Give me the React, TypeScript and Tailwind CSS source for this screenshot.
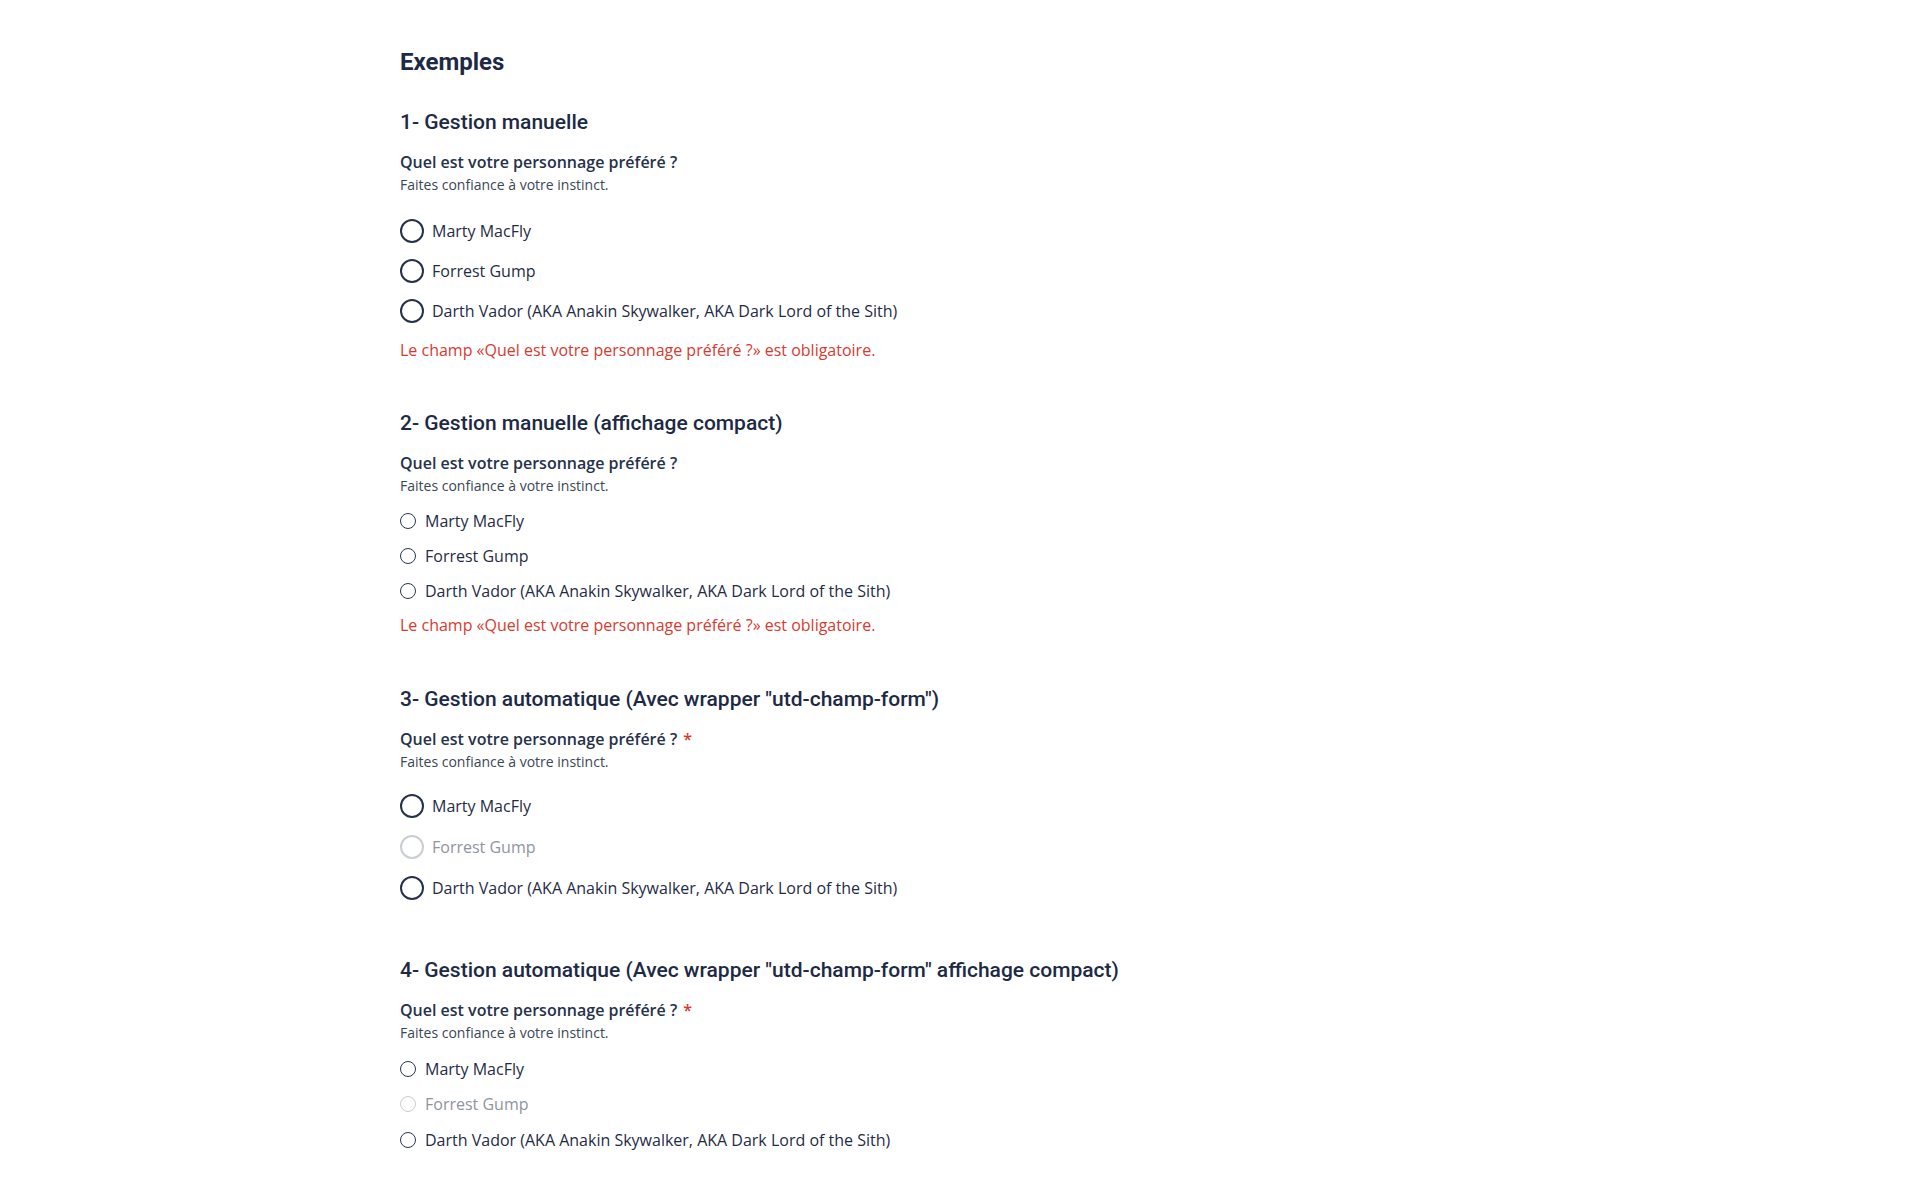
import React from 'react';

const options = [
  { label: 'Marty MacFly' },
  { label: 'Forrest Gump' },
  { label: 'Darth Vador (AKA Anakin Skywalker, AKA Dark Lord of the Sith)' },
];

const ERROR = 'Le champ «Quel est votre personnage préféré ?» est obligatoire.';

const Radio = ({ label, compact, disabled, tall }: { label: string; compact?: boolean; disabled?: boolean; tall?: boolean }) => {
  if (compact) {
    return (
      <label className={`flex items-center gap-[9px] ${tall ? 'h-[35.5px]' : 'h-[35px]'}`}>
        <span
          className={`w-4 h-4 rounded-full border ${disabled ? 'border-[#c9cdd4]' : 'border-[#2a3650]'}`}
        />
        <span className={`text-[16px] ${disabled ? 'text-[#8f959f]' : 'text-[#1f2c47]'}`}>{label}</span>
      </label>
    );
  }
  return (
    <label className={`flex items-center gap-[8px] ${tall ? 'h-[41px]' : 'h-10'}`}>
      <span
        className={`w-6 h-6 rounded-full border-2 ${disabled ? 'border-[#c9cdd4]' : 'border-[#26324c]'}`}
      />
      <span className={`text-[16px] ${disabled ? 'text-[#8f959f]' : 'text-[#1f2c47]'}`}>{label}</span>
    </label>
  );
};

const Question = ({ required }: { required?: boolean }) => (
  <div>
    <p className="text-[16px] leading-6 font-semibold text-[#26324a]">
      Quel est votre personnage préféré ?
      {required && <span className="text-[#d83a30] ml-[6px]">*</span>}
    </p>
    <p className="pt-[1px] text-[14px] leading-5 text-[#3c4658]">Faites confiance à votre instinct.</p>
  </div>
);

const Heading = ({ children }: { children: React.ReactNode }) => (
  <h2 className="font-['Roboto',sans-serif] text-[21px] leading-7 font-medium text-[#1d2a45] mb-[14px]">
    {children}
  </h2>
);

export default function App() {
  return (
    <div className="min-h-[1190px] bg-white font-['Open_Sans',sans-serif]">
      <div className="w-[1120px] mx-auto pt-[46px]">
        {/* Titre */}
        <h1 className="font-['Roboto',sans-serif] text-[24px] leading-8 font-bold text-[#1d2a45] mb-[30px]">
          Exemples
        </h1>

        {/* 1 */}
        <section className="mb-[47px]">
          <Heading>1- Gestion manuelle</Heading>
          <Question />
          <div className="mt-[16px]">
            {options.map((o) => (
              <Radio key={o.label} label={o.label} />
            ))}
          </div>
          <p className="mt-[7px] text-[16px] leading-6 text-[#d83a30]">{ERROR}</p>
        </section>

        {/* 2 */}
        <section className="mb-[48px]">
          <Heading>2- Gestion manuelle (affichage compact)</Heading>
          <Question />
          <div className="mt-[7px]">
            {options.map((o) => (
              <Radio key={o.label} label={o.label} compact />
            ))}
          </div>
          <p className="mt-[5px] text-[16px] leading-6 text-[#d83a30]">{ERROR}</p>
        </section>

        {/* 3 */}
        <section className="mb-[48px]">
          <Heading>3- Gestion automatique (Avec wrapper "utd-champ-form")</Heading>
          <Question required />
          <div className="mt-[13px]">
            <Radio label={options[0].label} tall />
            <Radio label={options[1].label} disabled tall />
            <Radio label={options[2].label} tall />
          </div>
        </section>

        {/* 4 */}
        <section>
          <Heading>4- Gestion automatique (Avec wrapper "utd-champ-form" affichage compact)</Heading>
          <Question required />
          <div className="mt-[8px]">
            <Radio label={options[0].label} compact tall />
            <Radio label={options[1].label} compact disabled tall />
            <Radio label={options[2].label} compact tall />
          </div>
        </section>
      </div>
    </div>
  );
}
